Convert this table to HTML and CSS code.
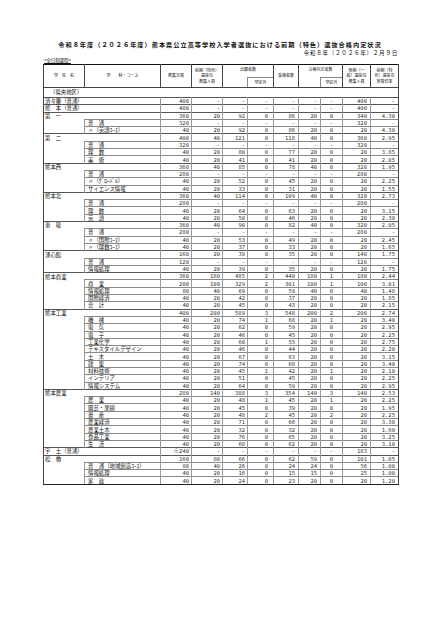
FILE: index.html
```html
<!DOCTYPE html>
<html lang="ja">
<head>
<meta charset="utf-8">
<title>前期（特色）選抜合格内定状況</title>
<link rel="stylesheet" href="styles.css">
</head>
<body>
<div class="page">
  <h1 class="title">令和８年度（２０２６年度）熊本県公立高等学校入学者選抜における前期（特色）選抜合格内定状況</h1>
  <div class="date">令和８年（２０２６年）２月９日</div>
  <div class="course">&lt;全日制課程&gt;</div>
  <table class="tbl">
    <colgroup>
      <col class="c1"><col class="c2"><col class="c3"><col class="c4"><col class="c5"><col class="c6"><col class="c7"><col class="c8"><col class="c9"><col class="c10"><col class="c11">
    </colgroup>
    <thead>
      <tr class="h1">
        <th rowspan="2">学　校　名</th>
        <th rowspan="2">学　　科・コース</th>
        <th rowspan="2">募集定員</th>
        <th rowspan="2">前期（特色）<br>選抜の<br>募集人員</th>
        <th colspan="2" class="grp">出願者数</th>
        <th rowspan="2">受検者数</th>
        <th colspan="2" class="grp">合格内定者数</th>
        <th rowspan="2">後期（一<br>般）選抜の<br>募集人員</th>
        <th rowspan="2">前期（特<br>色）選抜の<br>実質倍率</th>
      </tr>
      <tr class="h2">
        <th class="nob"></th><th class="kg">学区外</th>
        <th class="nob"></th><th class="kg">学区外</th>
      </tr>
    </thead>
    <tbody>
      <tr class="reg"><td colspan="11">（県央地区）</td></tr>
      <tr class="sch"><td>済々黌（普通）</td><td></td><td>400</td><td>-</td><td>-</td><td>-</td><td>-</td><td>-</td><td>-</td><td>400</td><td>-</td></tr>
      <tr class="sch"><td>熊　本（普通）</td><td></td><td>400</td><td>-</td><td>-</td><td>-</td><td>-</td><td>-</td><td>-</td><td>400</td><td>-</td></tr>
      <tr class="sch"><td>第　一</td><td></td><td>360</td><td>20</td><td>92</td><td>0</td><td>86</td><td>20</td><td>0</td><td>340</td><td>4.30</td></tr>
      <tr class="sub"><td></td><td>普　通</td><td>320</td><td>-</td><td>-</td><td>-</td><td>-</td><td>-</td><td>-</td><td>320</td><td>-</td></tr>
      <tr class="sub"><td></td><td>〃（英語ｺｰｽ）</td><td>40</td><td>20</td><td>92</td><td>0</td><td>86</td><td>20</td><td>0</td><td>20</td><td>4.30</td></tr>
      <tr class="sch"><td>第　二</td><td></td><td>400</td><td>40</td><td>121</td><td>0</td><td>118</td><td>40</td><td>0</td><td>360</td><td>2.95</td></tr>
      <tr class="sub"><td></td><td>普　通</td><td>320</td><td>-</td><td>-</td><td>-</td><td>-</td><td>-</td><td>-</td><td>320</td><td>-</td></tr>
      <tr class="sub"><td></td><td>理　数</td><td>40</td><td>20</td><td>80</td><td>0</td><td>77</td><td>20</td><td>0</td><td>20</td><td>3.85</td></tr>
      <tr class="sub"><td></td><td>美　術</td><td>40</td><td>20</td><td>41</td><td>0</td><td>41</td><td>20</td><td>0</td><td>20</td><td>2.05</td></tr>
      <tr class="sch"><td>熊本西</td><td></td><td>360</td><td>40</td><td>85</td><td>0</td><td>78</td><td>40</td><td>0</td><td>320</td><td>1.95</td></tr>
      <tr class="sub"><td></td><td>普　通</td><td>280</td><td>-</td><td>-</td><td>-</td><td>-</td><td>-</td><td>-</td><td>280</td><td>-</td></tr>
      <tr class="sub"><td></td><td>〃（ｸﾞﾛｰﾊﾞﾙ）</td><td>40</td><td>20</td><td>52</td><td>0</td><td>45</td><td>20</td><td>0</td><td>20</td><td>2.25</td></tr>
      <tr class="sub"><td></td><td>サイエンス情報</td><td>40</td><td>20</td><td>33</td><td>0</td><td>31</td><td>20</td><td>0</td><td>20</td><td>1.55</td></tr>
      <tr class="sch"><td>熊本北</td><td></td><td>360</td><td>40</td><td>114</td><td>0</td><td>109</td><td>40</td><td>0</td><td>320</td><td>2.73</td></tr>
      <tr class="sub"><td></td><td>普　通</td><td>280</td><td>-</td><td>-</td><td>-</td><td>-</td><td>-</td><td>-</td><td>280</td><td>-</td></tr>
      <tr class="sub"><td></td><td>理　数</td><td>40</td><td>20</td><td>64</td><td>0</td><td>63</td><td>20</td><td>0</td><td>20</td><td>3.15</td></tr>
      <tr class="sub"><td></td><td>英　語</td><td>40</td><td>20</td><td>50</td><td>0</td><td>46</td><td>20</td><td>0</td><td>20</td><td>2.30</td></tr>
      <tr class="sch"><td>東　稜</td><td></td><td>360</td><td>40</td><td>90</td><td>0</td><td>82</td><td>40</td><td>0</td><td>320</td><td>2.05</td></tr>
      <tr class="sub"><td></td><td>普　通</td><td>280</td><td>-</td><td>-</td><td>-</td><td>-</td><td>-</td><td>-</td><td>280</td><td>-</td></tr>
      <tr class="sub"><td></td><td>〃（国際ｺｰｽ）</td><td>40</td><td>20</td><td>53</td><td>0</td><td>49</td><td>20</td><td>0</td><td>20</td><td>2.45</td></tr>
      <tr class="sub"><td></td><td>〃（理数ｺｰｽ）</td><td>40</td><td>20</td><td>37</td><td>0</td><td>33</td><td>20</td><td>0</td><td>20</td><td>1.65</td></tr>
      <tr class="sch"><td>湧心館</td><td></td><td>160</td><td>20</td><td>39</td><td>0</td><td>35</td><td>20</td><td>0</td><td>140</td><td>1.75</td></tr>
      <tr class="sub"><td></td><td>普　通</td><td>120</td><td>-</td><td>-</td><td>-</td><td>-</td><td>-</td><td>-</td><td>120</td><td>-</td></tr>
      <tr class="sub"><td></td><td>情報処理</td><td>40</td><td>20</td><td>39</td><td>0</td><td>35</td><td>20</td><td>0</td><td>20</td><td>1.75</td></tr>
      <tr class="sch"><td>熊本商業</td><td></td><td>360</td><td>180</td><td>485</td><td>2</td><td>440</td><td>180</td><td>1</td><td>180</td><td>2.44</td></tr>
      <tr class="sub"><td></td><td>商　業</td><td>200</td><td>100</td><td>329</td><td>2</td><td>301</td><td>100</td><td>1</td><td>100</td><td>3.01</td></tr>
      <tr class="sub"><td></td><td>情報処理</td><td>80</td><td>40</td><td>69</td><td>0</td><td>59</td><td>40</td><td>0</td><td>40</td><td>1.48</td></tr>
      <tr class="sub"><td></td><td>国際経済</td><td>40</td><td>20</td><td>42</td><td>0</td><td>37</td><td>20</td><td>0</td><td>20</td><td>1.85</td></tr>
      <tr class="sub"><td></td><td>会　計</td><td>40</td><td>20</td><td>45</td><td>0</td><td>43</td><td>20</td><td>0</td><td>20</td><td>2.15</td></tr>
      <tr class="sch"><td>熊本工業</td><td></td><td>400</td><td>200</td><td>589</td><td>3</td><td>548</td><td>200</td><td>2</td><td>200</td><td>2.74</td></tr>
      <tr class="sub"><td></td><td>機　械</td><td>40</td><td>20</td><td>74</td><td>1</td><td>68</td><td>20</td><td>1</td><td>20</td><td>3.40</td></tr>
      <tr class="sub"><td></td><td>電　気</td><td>40</td><td>20</td><td>62</td><td>0</td><td>59</td><td>20</td><td>0</td><td>20</td><td>2.95</td></tr>
      <tr class="sub"><td></td><td>電　子</td><td>40</td><td>20</td><td>46</td><td>0</td><td>45</td><td>20</td><td>0</td><td>20</td><td>2.25</td></tr>
      <tr class="sub"><td></td><td>工業化学</td><td>40</td><td>20</td><td>60</td><td>1</td><td>55</td><td>20</td><td>0</td><td>20</td><td>2.75</td></tr>
      <tr class="sub"><td></td><td>テキスタイルデザイン</td><td>40</td><td>20</td><td>46</td><td>0</td><td>44</td><td>20</td><td>0</td><td>20</td><td>2.20</td></tr>
      <tr class="sub"><td></td><td>土　木</td><td>40</td><td>20</td><td>67</td><td>0</td><td>63</td><td>20</td><td>0</td><td>20</td><td>3.15</td></tr>
      <tr class="sub"><td></td><td>建　築</td><td>40</td><td>20</td><td>74</td><td>0</td><td>68</td><td>20</td><td>0</td><td>20</td><td>3.40</td></tr>
      <tr class="sub"><td></td><td>材料技術</td><td>40</td><td>20</td><td>45</td><td>1</td><td>42</td><td>20</td><td>1</td><td>20</td><td>2.10</td></tr>
      <tr class="sub"><td></td><td>インテリア</td><td>40</td><td>20</td><td>51</td><td>0</td><td>45</td><td>20</td><td>0</td><td>20</td><td>2.25</td></tr>
      <tr class="sub"><td></td><td>情報システム</td><td>40</td><td>20</td><td>64</td><td>0</td><td>59</td><td>20</td><td>0</td><td>20</td><td>2.95</td></tr>
      <tr class="sch"><td>熊本農業</td><td></td><td>280</td><td>140</td><td>388</td><td>3</td><td>354</td><td>140</td><td>3</td><td>140</td><td>2.53</td></tr>
      <tr class="sub"><td></td><td>農　業</td><td>40</td><td>20</td><td>48</td><td>1</td><td>45</td><td>20</td><td>1</td><td>20</td><td>2.25</td></tr>
      <tr class="sub"><td></td><td>園芸・果樹</td><td>40</td><td>20</td><td>45</td><td>0</td><td>39</td><td>20</td><td>0</td><td>20</td><td>1.95</td></tr>
      <tr class="sub"><td></td><td>畜　産</td><td>40</td><td>20</td><td>48</td><td>2</td><td>45</td><td>20</td><td>2</td><td>20</td><td>2.25</td></tr>
      <tr class="sub"><td></td><td>農業経済</td><td>40</td><td>20</td><td>71</td><td>0</td><td>66</td><td>20</td><td>0</td><td>20</td><td>3.30</td></tr>
      <tr class="sub"><td></td><td>農業土木</td><td>40</td><td>20</td><td>32</td><td>0</td><td>32</td><td>20</td><td>0</td><td>20</td><td>1.60</td></tr>
      <tr class="sub"><td></td><td>食品工業</td><td>40</td><td>20</td><td>76</td><td>0</td><td>65</td><td>20</td><td>0</td><td>20</td><td>3.25</td></tr>
      <tr class="sub"><td></td><td>生　活</td><td>40</td><td>20</td><td>68</td><td>0</td><td>62</td><td>20</td><td>0</td><td>20</td><td>3.10</td></tr>
      <tr class="sch"><td>宇　土（普通）</td><td></td><td>※240</td><td>-</td><td>-</td><td>-</td><td>-</td><td>-</td><td>-</td><td>183</td><td>-</td></tr>
      <tr class="sch"><td>松　橋</td><td></td><td>160</td><td>80</td><td>66</td><td>0</td><td>62</td><td>59</td><td>0</td><td>101</td><td>1.05</td></tr>
      <tr class="sub"><td></td><td>普　通（地域創造ｺｰｽ）</td><td>80</td><td>40</td><td>26</td><td>0</td><td>24</td><td>24</td><td>0</td><td>56</td><td>1.00</td></tr>
      <tr class="sub"><td></td><td>情報処理</td><td>40</td><td>20</td><td>16</td><td>0</td><td>15</td><td>15</td><td>0</td><td>25</td><td>1.00</td></tr>
      <tr class="sub last"><td></td><td>家　政</td><td>40</td><td>20</td><td>24</td><td>0</td><td>23</td><td>20</td><td>0</td><td>20</td><td>1.20</td></tr>
    </tbody>
  </table>
</div>
</body>
</html>
```
FILE: styles.css
```css
* { box-sizing: border-box; }
body {
  margin: 0;
  background: #fff;
  color: #111;
  font-family: "Noto Sans CJK JP", "Noto Sans", sans-serif;
}
.page {
  width: 440px;
  height: 622px;
  overflow: hidden;
}
.title {
  margin: 0;
  padding-top: 41px;
  text-align: center;
  font-size: 6.2px;
  line-height: 7px;
  font-weight: bold;
  letter-spacing: 1px;
}
.date {
  margin-top: 2px;
  text-align: right;
  padding-right: 42px;
  font-size: 5.6px;
  line-height: 7px;
  letter-spacing: 0.7px;
}
.course {
  margin-left: 44px;
  font-size: 4.4px;
  line-height: 7px;
  text-decoration: underline;
}
.tbl {
  margin-left: 43px;
  width: 355px;
  table-layout: fixed;
  border-collapse: collapse;
  font-size: 5.4px;
  line-height: 6px;
}
.c1 { width: 41px; }
.c2 { width: 76px; }
.c3 { width: 31px; }
.c4 { width: 31px; }
.c5 { width: 25px; }
.c6 { width: 26px; }
.c7 { width: 25px; }
.c8 { width: 22px; }
.c9 { width: 22px; }
.c10 { width: 28px; }
.c11 { width: 28px; }

.tbl th {
  font-weight: normal;
  font-size: 4px;
  line-height: 5.6px;
  padding: 0;
  border: 1px solid #444;
  text-align: center;
  vertical-align: middle;
  white-space: nowrap;
}
.tbl tr.h1 th { border-top: 1px solid #111; }
.tbl tr.h1 { height: 13px; }
.tbl tr.h2 { height: 10px; }
.tbl th.grp {
  border-bottom: none;
  vertical-align: top;
  padding-top: 2px;
}
.tbl th.nob {
  border-top: none;
  border-right: 1px solid #888;
}
.tbl th.kg {
  border-top: 1px solid #888;
  border-left: 1px solid #888;
}

.tbl td {
  padding: 0;
  white-space: nowrap;
  overflow: visible;
  vertical-align: middle;
  border-left: 1px solid #999;
  border-right: 1px solid #999;
}
.tbl tr.reg { height: 10px; }
.tbl tr.reg td {
  text-align: left;
  vertical-align: top;
  padding: 1px 0 0 6px;
  border-left: 1px solid #444;
  border-right: 1px solid #444;
}
.tbl tr.sch, .tbl tr.sub { height: 7.3px; }
.tbl tr.sch td { border-top: 1px solid #555; }
.tbl tr.sub td { border-top: 1px solid #888; }

.tbl tr.sch td:nth-child(1),
.tbl tr.sub td:nth-child(1) {
  text-align: left;
  padding-left: 1px;
  border-left: 1px solid #444;
}
.tbl tr.sub td:nth-child(1) { border-top: none; }
.tbl tr.sch td:nth-child(1) { border-right: none; }
.tbl tr.sch td:nth-child(2) { border-left: none; }
.tbl tr.sub td:nth-child(2) {
  text-align: left;
  padding-left: 3px;
}

.tbl tr.sch td:nth-child(n+3),
.tbl tr.sub td:nth-child(n+3) {
  font-family: "DejaVu Sans Mono", "Noto Sans CJK JP", monospace;
  font-size: 5.5px;
  color: #333;
  text-align: right;
  padding-right: 2px;
}
.tbl tr.sch td:nth-child(6),
.tbl tr.sub td:nth-child(6) { text-align: right; padding-right: 5px; }
.tbl tr.sch td:nth-child(9),
.tbl tr.sub td:nth-child(9) { text-align: center; padding-right: 0; }
.tbl tr.sch td:nth-child(7),
.tbl tr.sub td:nth-child(7),
.tbl tr.sch td:nth-child(8),
.tbl tr.sub td:nth-child(8),
.tbl tr.sch td:nth-child(10),
.tbl tr.sub td:nth-child(10),
.tbl tr.sch td:nth-child(11),
.tbl tr.sub td:nth-child(11) { padding-right: 3px; }
.tbl td:last-child { border-right: 1px solid #444; }
.tbl tr.last td { border-bottom: 1px solid #222; }
```
